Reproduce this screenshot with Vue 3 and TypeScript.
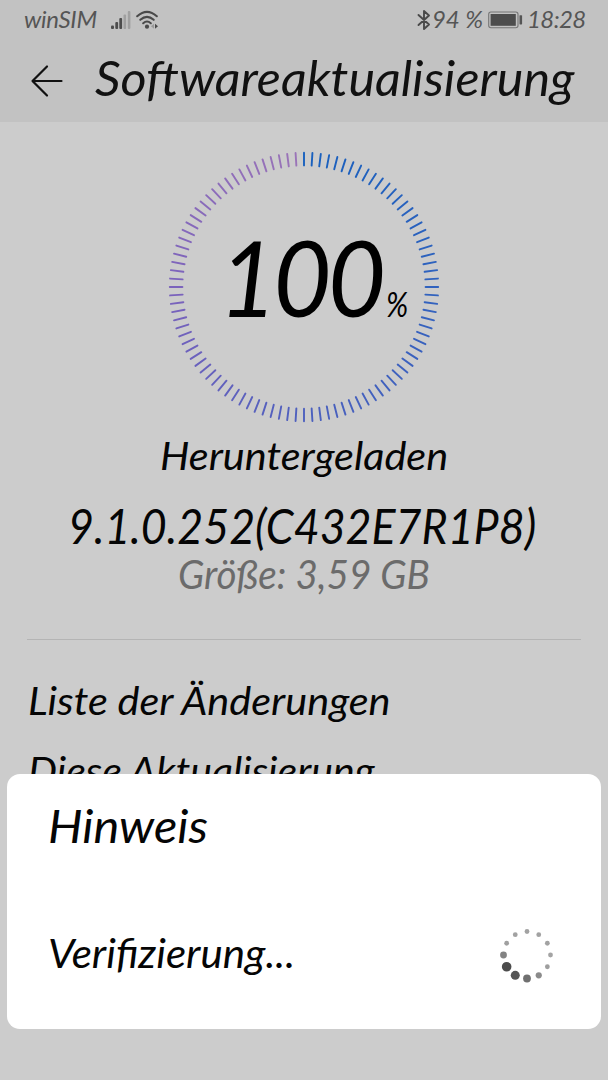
<script setup lang="ts">
interface Tick { angle: number; color: string }
interface Dot { x: number; y: number; r: number; color: string }

const stops: number[][] = [
  [24, 96, 190],
  [48, 98, 190],
  [76, 96, 190],
  [122, 98, 188],
  [154, 116, 184],
]

function mix(t: number): string {
  const p = t * (stops.length - 1)
  const i = Math.min(Math.floor(p), stops.length - 2)
  const f = p - i
  return `rgb(${stops[i].map((v, k) => Math.round(v + (stops[i + 1][k] - v) * f)).join(',')})`
}

const ticks: Tick[] = Array.from({ length: 100 }, (_, i) => ({ angle: i * 3.6, color: mix(i / 99) }))

const sizes: number[] = [2.4, 2.4, 2.4, 2.4, 2.4, 3.1, 3.9, 4.5, 4.8, 3.4, 2.4, 2.4]
const shades: string[] = ['#a2a2a2', '#a2a2a2', '#a2a2a2', '#a4a4a4', '#9e9e9e', '#8b8b8b', '#707070', '#555', '#4c4c4c', '#838383', '#a0a0a0', '#a2a2a2']
const dots: Dot[] = sizes.map((r, i) => {
  const a = (i * Math.PI) / 6
  return { x: 30 + 23.5 * Math.sin(a), y: 30 - 23.5 * Math.cos(a), r, color: shades[i] }
})
</script>

<template>
  <div class="screen">
    <div class="top">
      <div class="status">
        <span class="carrier">winSIM</span>
        <svg class="signal" width="20" height="20" viewBox="0 0 20 20">
          <g fill="#4d4d4d">
            <rect x="0" y="15.5" width="3" height="3.5" rx="1" />
            <rect x="4.3" y="12" width="2.8" height="7" rx="1" />
            <rect x="8.3" y="8" width="2.8" height="11" rx="1" />
          </g>
          <g fill="#a0a0a0">
            <rect x="12.5" y="4.5" width="2.6" height="14.5" rx="1" />
            <rect x="16.8" y="1" width="2.6" height="18" rx="1" />
          </g>
        </svg>
        <svg class="wifi" width="24" height="20" viewBox="0 0 24 20">
          <g fill="none" stroke="#4a4a4a" stroke-width="2.1" stroke-linecap="round">
            <path d="M1.2 6.2Q11 -2.6 20.8 6.2" />
            <path d="M4.3 9.8Q11 3.8 17.7 9.8" />
            <path d="M7.2 13.2Q11 9.8 14.8 13.2" />
          </g>
          <circle cx="11" cy="16.7" r="2.1" fill="#4a4a4a" />
          <path d="M18 13.7v5l-3-2.5z" fill="#999" />
          <path d="M19 13.7v5l3-2.5z" fill="#4a4a4a" />
        </svg>
        <span class="grow" />
        <svg class="bt" width="14" height="22" viewBox="0 0 14 22">
          <path d="M1.5 6 12 15.5 7 20V2l5 4.5L1.5 16" fill="none" stroke="#4a4a4a" stroke-width="1.9" stroke-linejoin="round" stroke-linecap="round" />
        </svg>
        <span class="charge">94 %</span>
        <svg class="battery" width="36" height="18" viewBox="0 0 36 18">
          <rect x="0.7" y="1" width="29.3" height="15.8" rx="2.2" fill="none" stroke="#757575" stroke-width="1.1" />
          <rect x="2.6" y="3" width="25.2" height="11.8" fill="#4d4d4d" />
          <rect x="31.5" y="4.2" width="2.6" height="9.2" rx=".6" fill="#555" />
        </svg>
        <span class="clock">18:28</span>
      </div>
      <div class="header">
        <svg class="back" width="34" height="34" viewBox="0 0 34 34">
          <path d="M31.5 17H2.5M17 2.5 2.5 17 17 31.5" fill="none" stroke="#111" stroke-width="2.2" stroke-linecap="round" stroke-linejoin="round" />
        </svg>
        <h1>Softwareaktualisierung</h1>
      </div>
    </div>

    <div class="ring">
      <svg width="272" height="272" viewBox="-136 -136 272 272">
        <line v-for="t in ticks" :key="t.angle" x1="0" y1="-134.2" x2="0" y2="-121.6" :stroke="t.color" stroke-width="1.9" stroke-linecap="round" :transform="`rotate(${t.angle})`" />
      </svg>
      <div class="percent"><span class="num">100</span><span class="sign">%</span></div>
    </div>

    <p class="state">Heruntergeladen</p>
    <p class="version">9.1.0.252(C432E7R1P8)</p>
    <p class="size">Größe: 3,59 GB</p>
    <div class="divider" />
    <p class="changes">Liste der Änderungen</p>
    <p class="detail">Diese Aktualisierung</p>

    <div class="dialog">
      <h2>Hinweis</h2>
      <div class="progress">
        <span class="verify">Verifizierung...</span>
        <svg class="spinner" width="60" height="60" viewBox="0 0 60 60">
          <circle v-for="(d, i) in dots" :key="i" :cx="d.x" :cy="d.y" :r="d.r" :fill="d.color" />
        </svg>
      </div>
    </div>
  </div>
</template>

<style>
body { margin: 0; background: #ccc; }
</style>

<style scoped>
.screen {
  position: relative;
  width: 608px;
  height: 1080px;
  overflow: hidden;
  background: #cccccc;
  color: #050505;
  font-family: Lato, "Open Sans", sans-serif;
  font-style: italic;
  white-space: nowrap;
}
p, h1, h2 { margin: 0; font-weight: 400; transform-origin: left center; }
.top { height: 121.5px; background: #c2c2c2; }
.status { display: flex; height: 38px; padding: 0 21px 0 24px; line-height: 38px; font-size: 24px; color: #555; }
.grow { flex: 1; }
.carrier { width: 87px; letter-spacing: -0.3px; }
.signal { margin-top: 10px; }
.wifi { margin: 10px 0 0 5px; }
.bt { margin: 9px 1px 0 0; }
.charge { width: 56px; letter-spacing: -0.1px; }
.battery { margin: 11px 0 0 0; }
.clock { width: 60px; margin-left: 3px; letter-spacing: -0.6px; }
.header { display: flex; align-items: center; height: 80px; padding-left: 30px; }
.back { margin-top: 5px; }
h1 { margin-left: 31px; font-size: 48px; line-height: 58px; color: #111; transform: scaleX(1.049); }
.ring { position: relative; width: 272px; height: 272px; margin: 29px auto 0; }
.percent { position: absolute; left: 51px; top: 64px; display: flex; align-items: baseline; line-height: 124px; color: #000; }
.num { width: 167px; font-size: 104px; letter-spacing: -4px; transform: scaleX(0.965); transform-origin: left; }
.sign { font-size: 34px; transform: scaleX(0.88); transform-origin: left; }
.state { margin-top: 8.5px; margin-left: 160px; font-size: 39px; line-height: 48px; transform: scaleX(1.063); }
.version { margin-top: 18px; margin-left: 68px; font-size: 48px; line-height: 58px; transform: scaleX(0.932); }
.size { margin-top: -5px; margin-left: 178px; font-size: 40px; line-height: 48px; color: #6b6b6b; transform: scaleX(0.965); }
.divider { height: 1px; margin: 41px 27px 0; background: #b4b4b4; }
.changes { margin: 36px 0 0 28px; font-size: 39px; line-height: 48px; transform: scaleX(1.063); }
.detail { margin: 22px 0 0 28px; font-size: 39px; line-height: 48px; transform: scaleX(1.053); }
.dialog { position: absolute; left: 7px; top: 774px; box-sizing: border-box; width: 594px; height: 255px; padding: 22px 44px 0 41px; border-radius: 13px; background: #fff; }
h2 { font-size: 47px; line-height: 58px; transform: scaleX(1.037); }
.progress { display: flex; justify-content: space-between; margin-top: 71px; }
.verify { margin-top: 3.5px; font-size: 40px; line-height: 48px; transform: scaleX(1.053); transform-origin: left; }
.spinner { margin: 0; }
</style>
